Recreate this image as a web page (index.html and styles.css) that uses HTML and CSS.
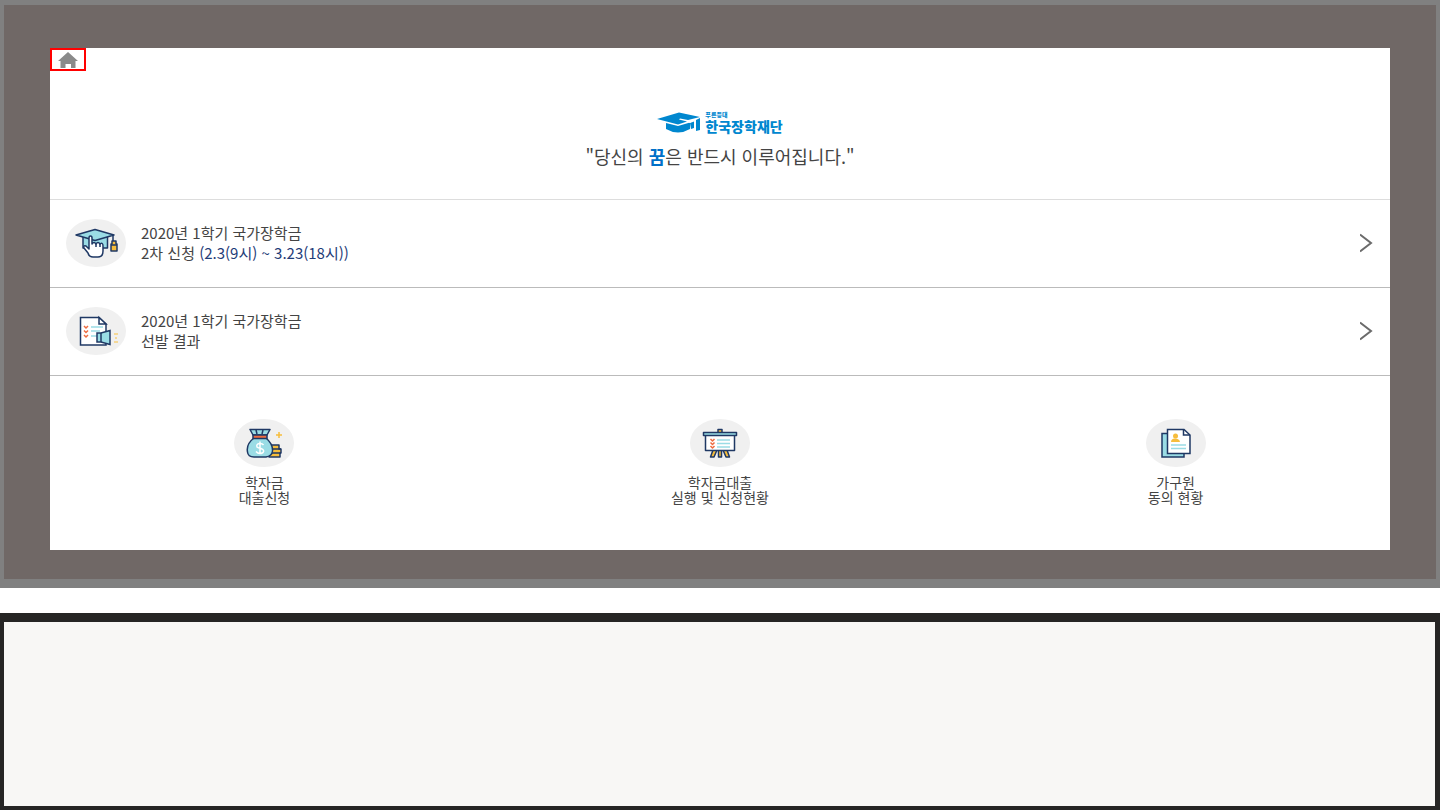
FILE: index.html
```html
<!DOCTYPE html>
<html lang="ko">
<head>
    <meta charset="UTF-8">
    <meta name="viewport" content="width=device-width, initial-scale=1.0">
    <title>한국장학재단</title>
    <link rel="stylesheet" href="styles.css">
</head>
<body>
    <div class="frame">
        <main class="panel">
            <a href="#" class="home" aria-label="홈">
                <svg width="20" height="16" viewBox="0 0 20 16">
                    <path d="M10 0L20 9H17.500V16H13V12H7.500V16H2.500V9H0Z" fill="#8a8a8a"/>
                </svg>
            </a>
            <header class="intro">
                <div class="logo">
                    <svg width="44" height="21" viewBox="0 0 44 21" fill="#0087cf">
                        <path d="M0 7L22 0.500L43 5L31 8L23 6.500L22 7.500L30 9.500L21 12.500Z"/>
                        <path d="M9 11L21 14L33 10.500V17Q21 24 9 17Z"/>
                        <path d="M33 11L37 9.500V16L34 17Z"/>
                        <path d="M39 8L43 6V18L39 19Z"/>
                        <path d="M32 10.500L38 8" stroke="#fff" stroke-width="1"/>
                    </svg>
                    <div class="logo-text">
                        <span class="logo-small">푸른등대</span>
                        <span class="logo-name">한국장학재단</span>
                    </div>
                </div>
                <h1>"당신의 <strong>꿈</strong>은 반드시 이루어집니다."</h1>
            </header>

            <a href="#" class="row">
                <span class="icon">
                    <svg width="60" height="48" viewBox="0 0 60 48" fill="none" stroke="#1f3864" stroke-width="1.500" stroke-linejoin="round">
                        <path d="M17 18V29H41.500V18Z" fill="#9adce5"/>
                        <path d="M10 16L29 10.500L48 16L29 21.500Z" fill="#9adce5"/>
                        <path d="M47 16.500V22"/>
                        <path d="M46 22H50V25H51V32H45V25H46Z" fill="#f6bd3c"/>
                        <path d="M45 26H51"/>
                        <path d="M23 27V19Q23 17 24.500 17Q26 17 26 19V25Q28 22 30 25Q32 22 34 25Q37 23 37 27V32Q37 38 32 38H27Q23 38 22 34L18 29Q17 26 20 27L23 30Z" fill="#fff"/>
                        <path d="M30 25V28M34 25V28"/>
                    </svg>
                </span>
                <span class="row-text">2020년 1학기 국가장학금<br>2차 신청 <em>(2.3(9시) ~ 3.23(18시))</em></span>
                <svg class="arrow" width="14" height="20" viewBox="0 0 14 20">
                    <path d="M0 1.500L11 10L0 18.500" fill="none" stroke="#6b6b6b" stroke-width="2"/>
                </svg>
            </a>

            <a href="#" class="row">
                <span class="icon">
                    <svg width="60" height="48" viewBox="0 0 60 48" fill="none" stroke="#1f3864" stroke-width="1.500">
                        <path d="M14.500 10.500H33L40 17V38H14.500Z" fill="#fff"/>
                        <path d="M33 10.500V17H40Z" fill="#fff"/>
                        <path d="M25 20H37M25 24H34M25 29H32" stroke="#9adce5"/>
                        <path d="M18 19L20 21L22 19M18 23.500L20 25.500L22 23.500M18 28L20 30L22 28" stroke="#ee6b40"/>
                        <path d="M31 26H35L44 23.500V37.500L35 35H31Z" fill="#9adce5"/>
                        <path d="M35 26V35"/>
                        <path d="M48 27H52M49 31H51M48 35H52" stroke="#f6d07a"/>
                    </svg>
                </span>
                <span class="row-text">2020년 1학기 국가장학금<br>선발 결과</span>
                <svg class="arrow" width="14" height="20" viewBox="0 0 14 20">
                    <path d="M0 1.500L11 10L0 18.500" fill="none" stroke="#6b6b6b" stroke-width="2"/>
                </svg>
            </a>

            <nav class="menu">
                <a href="#" class="menu-item">
                    <span class="icon">
                        <svg width="60" height="48" viewBox="0 0 60 48" fill="none" stroke="#1f3864" stroke-width="1.500" stroke-linejoin="round">
                            <path d="M36 26H45V30H47V34H46V38H35Z" fill="#f6bd3c"/>
                            <path d="M36 30H47M36 34H47"/>
                            <path d="M20 19Q12 25 13.500 33Q14 38 20 38H32Q38 37 38.500 32Q39 25 32 19Z" fill="#9adce5"/>
                            <path d="M16 10.500H36L33 16H19Z" fill="#9adce5"/>
                            <path d="M22 11L23 15M29 11L28 15"/>
                            <path d="M19 16H33V19.500H19Z" fill="#ee6b40"/>
                            <path d="M29.500 26Q28 24 25.500 24.500Q22 25 23 28Q24 29 27 29.500Q31 31 29 33.500Q25 36 22 32.500M26 22.500V35" stroke="#fff"/>
                            <path d="M45 13V19M42 16H48" stroke="#f6bd3c"/>
                        </svg>
                    </span>
                    <span>학자금<br>대출신청</span>
                </a>
                <a href="#" class="menu-item">
                    <span class="icon">
                        <svg width="60" height="48" viewBox="0 0 60 48" fill="none" stroke="#1f3864" stroke-width="1.500" stroke-linejoin="round">
                            <path d="M28 14V10.500H32V14Z" fill="#f6bd3c"/>
                            <path d="M23 31L20.500 38H24L27 31ZM37 31L39.500 38H36L33 31ZM28.500 31V38H31.500V31Z" fill="#f6bd3c"/>
                            <path d="M15.500 16H44.500V31.500H15.500Z" fill="#fff"/>
                            <path d="M13.500 13.500H46.500V16.500H13.500Z" fill="#9adce5"/>
                            <path d="M27 21H40M27 24.500H40M27 28H40" stroke="#9adce5"/>
                            <path d="M20.500 20L22.500 22L24.500 20M20.500 23.500L22.500 25.500L24.500 23.500M20.500 27L22.500 29L24.500 27" stroke="#ee6b40"/>
                        </svg>
                    </span>
                    <span>학자금대출<br>실행 및 신청현황</span>
                </a>
                <a href="#" class="menu-item">
                    <span class="icon">
                        <svg width="60" height="48" viewBox="0 0 60 48" fill="none" stroke="#1f3864" stroke-width="1.500">
                            <path d="M16 14.500H38V38H16Z" fill="#9adce5"/>
                            <path d="M21.500 10.500H38L44 16V34.500H21.500Z" fill="#fff"/>
                            <path d="M37.500 10.500V16H44"/>
                            <path d="M25 23Q25 19.500 29 19.500Q33.500 19.500 34 23Z" fill="#f6bd3c" stroke="none"/>
                            <circle cx="29.500" cy="17" r="2.500" fill="#f6bd3c" stroke="none"/>
                            <path d="M25 26H40M25 29.500H40" stroke="#9adce5"/>
                        </svg>
                    </span>
                    <span>가구원<br>동의 현황</span>
                </a>
            </nav>
        </main>
    </div>
    <div class="bottom-box"></div>
</body>
</html>
```
FILE: styles.css
```css
* {
    box-sizing: border-box;
}
body {
    display: flex;
    flex-direction: column;
    gap: 25px;
    min-height: 100vh;
    margin: 0;
    background-color: #fff;
    color: #444;
    font-family: 'Noto Sans CJK KR', sans-serif;
}
a {
    color: inherit;
    text-decoration: none;
}
svg {
    display: block;
    flex-shrink: 0;
}
.frame {
    padding: 43px 46px 29px;
    border: solid #808080;
    border-width: 5px 4px 9px;
    background-color: #706866;
}
.panel {
    background-color: #fff;
}
.home {
    display: flex;
    align-items: center;
    justify-content: center;
    width: 36px;
    height: 23px;
    border: 2px solid #f00;
}
.intro {
    display: flex;
    flex-direction: column;
    align-items: center;
    gap: 7px;
    padding: 40px 0 28px;
    border-bottom: 1px solid #ddd;
}
.logo {
    display: flex;
    align-items: center;
    gap: 4px;
    color: #0087cf;
    font-weight: 900;
}
.logo-text {
    display: flex;
    flex-direction: column;
}
.logo-small {
    font-size: 6px;
    line-height: 8px;
}
.logo-name {
    font-size: 14px;
    line-height: 15px;
}
h1 {
    margin: 0;
    font-size: 18px;
    font-weight: 400;
    line-height: 30px;
}
h1 strong {
    color: #0070c8;
    font-weight: 700;
}
.row {
    display: flex;
    align-items: center;
    gap: 15px;
    height: 88px;
    padding: 0 16px 2px;
    border-bottom: 1px solid #bbb;
    font-size: 15px;
    line-height: 20px;
}
.row-text {
    flex: 1;
}
.row em {
    color: #1f3c78;
    font-style: normal;
}
.icon {
    display: block;
    width: 60px;
    height: 48px;
    border-radius: 50%;
    background-color: #f0f0f0;
}
.menu {
    display: grid;
    grid-template-columns: 32% 36% 32%;
    padding: 43px 0 45px;
}
.menu-item {
    display: flex;
    flex-direction: column;
    align-items: center;
    gap: 8px;
    font-size: 14px;
    line-height: 15px;
    text-align: center;
}
.bottom-box {
    flex: 1;
    border: solid #262524;
    border-width: 9px 5px 4px 4px;
    background-color: #f8f7f5;
}
```
